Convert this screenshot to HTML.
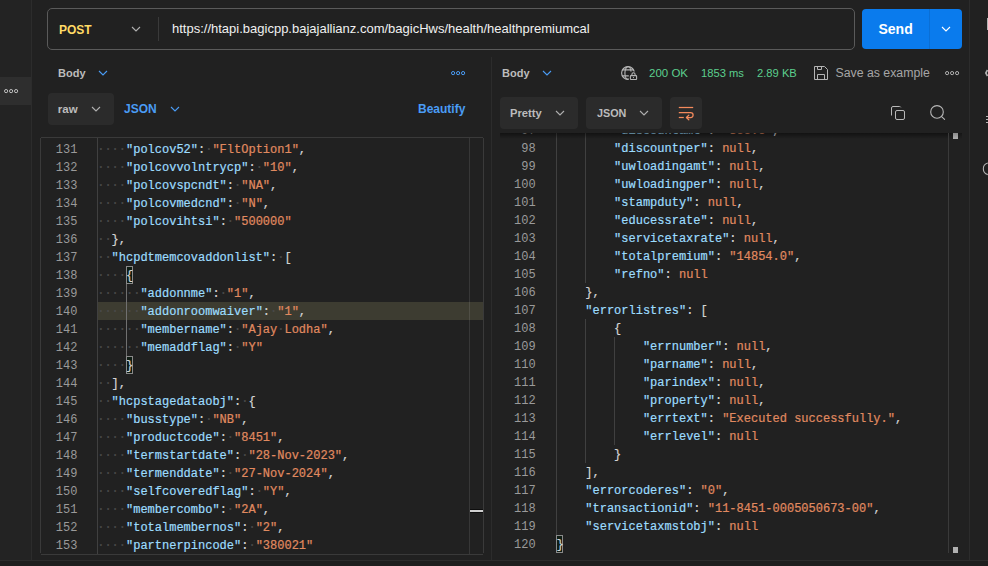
<!DOCTYPE html>
<html><head><meta charset="utf-8">
<style>
*{margin:0;padding:0;box-sizing:border-box}
html,body{width:988px;height:566px;overflow:hidden;background:#212121;font-family:"Liberation Sans",sans-serif}
.a{position:absolute}
.t{position:absolute;white-space:pre;line-height:1}
.ic{position:absolute;overflow:visible}
.ln{position:absolute;width:60px;text-align:right;font-family:"Liberation Mono",monospace;font-size:12px;line-height:18px;color:#9a9a9a;white-space:pre}
.cl{position:absolute;font-family:"Liberation Mono",monospace;font-size:12px;line-height:18px;color:#d4d4d4;white-space:pre;-webkit-text-stroke:0.2px currentColor}
.cl b{font-weight:normal;color:#9cdcfe}
.cl s{text-decoration:none;color:#e08a60}
.cl i{font-style:normal;color:#4a4a4a}
</style></head><body>
<!-- left sidebar -->
<div class="a" style="left:0;top:0;width:31px;height:560px;background:#232323"></div>
<div class="a" style="left:31px;top:0;width:1px;height:560px;background:#2c2c2c"></div>
<div class="a" style="left:0;top:77px;width:31px;height:28px;background:#2e2e2e"></div>
<svg class="ic" style="left:2.6px;top:87.5px" width="16.2" height="6.2"><circle cx="3.1" cy="3.1" r="1.6" fill="none" stroke="#c0c0c0" stroke-width="1"/><circle cx="8.1" cy="3.1" r="1.6" fill="none" stroke="#c0c0c0" stroke-width="1"/><circle cx="13.1" cy="3.1" r="1.6" fill="none" stroke="#c0c0c0" stroke-width="1"/></svg>
<!-- right sidebar border -->
<div class="a" style="left:969px;top:0;width:1px;height:560px;background:#2c2c2c"></div>
<!-- status bar -->
<div class="a" style="left:0;top:560px;width:988px;height:1px;background:#2c2c2c"></div>
<div class="a" style="left:0;top:561px;width:988px;height:5px;background:#1e1e1e"></div>

<!-- URL bar -->
<div class="a" style="left:47px;top:8px;width:808px;height:42px;border:1px solid #5a5a5a;border-radius:5px"></div>
<div class="t" style="left:59px;top:23.7px;font-size:12px;font-weight:bold;color:#ffdb66">POST</div>
<svg class="ic" style="left:130.5px;top:25.5px" width="10" height="6" viewBox="0 0 10 6"><path d="M1 1 L5.0 5 L9 1" fill="none" stroke="#b0b0b0" stroke-width="1.1"/></svg>
<div class="a" style="left:158px;top:17px;width:1px;height:24px;background:#3a3a3a"></div>
<div class="t" style="left:172px;top:22px;font-size:13px;color:#f0f0f0">https://htapi.bagicpp.bajajallianz.com/bagicHws/health/healthpremiumcal</div>
<!-- Send -->
<div class="a" style="left:862px;top:9px;width:100px;height:40px;background:#0a7bed;border-radius:4px"></div>
<div class="a" style="left:929px;top:9px;width:1px;height:40px;background:#0a6fd6"></div>
<div class="t" style="left:878.5px;top:21.9px;font-size:14px;font-weight:bold;color:#ffffff">Send</div>
<svg class="ic" style="left:940.5px;top:25.5px" width="10" height="6" viewBox="0 0 10 6"><path d="M1 1 L5.0 5 L9 1" fill="none" stroke="#ffffff" stroke-width="1.1"/></svg>

<!-- left toolbar -->
<div class="t" style="left:58px;top:67.5px;font-size:11px;font-weight:bold;color:#bcbcbc">Body</div>
<svg class="ic" style="left:97.5px;top:69.5px" width="10" height="6" viewBox="0 0 10 6"><path d="M1 1 L5.0 5 L9 1" fill="none" stroke="#4a9cf5" stroke-width="1.1"/></svg>
<svg class="ic" style="left:449.5px;top:70px" width="16.2" height="6.2"><circle cx="3.1" cy="3.1" r="1.6" fill="none" stroke="#4a9cf5" stroke-width="1"/><circle cx="8.1" cy="3.1" r="1.6" fill="none" stroke="#4a9cf5" stroke-width="1"/><circle cx="13.1" cy="3.1" r="1.6" fill="none" stroke="#4a9cf5" stroke-width="1"/></svg>
<div class="a" style="left:48px;top:93px;width:66px;height:32px;background:#2b2b2b;border-radius:4px"></div>
<div class="t" style="left:57.8px;top:103.8px;font-size:11.5px;font-weight:bold;color:#bcbcbc">raw</div>
<svg class="ic" style="left:90.5px;top:105.5px" width="10" height="6" viewBox="0 0 10 6"><path d="M1 1 L5.0 5 L9 1" fill="none" stroke="#b0b0b0" stroke-width="1.1"/></svg>
<div class="t" style="left:124px;top:102.8px;font-size:12px;font-weight:bold;color:#4a9cf5">JSON</div>
<svg class="ic" style="left:169.5px;top:105.5px" width="10" height="6" viewBox="0 0 10 6"><path d="M1 1 L5.0 5 L9 1" fill="none" stroke="#4a9cf5" stroke-width="1.1"/></svg>
<div class="t" style="left:418px;top:102.8px;font-size:12px;font-weight:bold;color:#4a9cf5">Beautify</div>

<!-- divider -->
<div class="a" style="left:491px;top:57px;width:1px;height:503px;background:#2c2c2c"></div>

<!-- right toolbar -->
<div class="t" style="left:502px;top:67.5px;font-size:11px;font-weight:bold;color:#bcbcbc">Body</div>
<svg class="ic" style="left:541.5px;top:69.5px" width="10" height="6" viewBox="0 0 10 6"><path d="M1 1 L5.0 5 L9 1" fill="none" stroke="#4a9cf5" stroke-width="1.1"/></svg>
<div class="t" style="left:649px;top:67.6px;font-size:11.5px;color:#5ccf8e">200 OK</div>
<div class="t" style="left:701px;top:67.6px;font-size:11.2px;color:#5ccf8e">1853 ms</div>
<div class="t" style="left:757px;top:67.6px;font-size:11.2px;color:#5ccf8e">2.89 KB</div>
<div class="t" style="left:835.5px;top:67px;font-size:12.3px;color:#a6a6a6">Save as example</div>
<svg class="ic" style="left:943.5px;top:70px" width="16.2" height="6.2"><circle cx="3.1" cy="3.1" r="1.6" fill="none" stroke="#b0b0b0" stroke-width="1"/><circle cx="8.1" cy="3.1" r="1.6" fill="none" stroke="#b0b0b0" stroke-width="1"/><circle cx="13.1" cy="3.1" r="1.6" fill="none" stroke="#b0b0b0" stroke-width="1"/></svg>
<div class="a" style="left:500px;top:97px;width:78px;height:32px;background:#2b2b2b;border-radius:4px"></div>
<div class="t" style="left:510px;top:107.5px;font-size:11.2px;font-weight:bold;color:#bcbcbc">Pretty</div>
<svg class="ic" style="left:554.5px;top:109.5px" width="10" height="6" viewBox="0 0 10 6"><path d="M1 1 L5.0 5 L9 1" fill="none" stroke="#b0b0b0" stroke-width="1.1"/></svg>
<div class="a" style="left:586px;top:97px;width:76px;height:32px;background:#2b2b2b;border-radius:4px"></div>
<div class="t" style="left:597px;top:107.5px;font-size:10.8px;font-weight:bold;color:#bcbcbc">JSON</div>
<svg class="ic" style="left:638.5px;top:109.5px" width="10" height="6" viewBox="0 0 10 6"><path d="M1 1 L5.0 5 L9 1" fill="none" stroke="#b0b0b0" stroke-width="1.1"/></svg>
<div class="a" style="left:670px;top:97px;width:32px;height:32px;background:#2b2b2b;border-radius:4px"></div>

<!-- left editor -->
<div class="a" style="left:41px;top:137px;width:442px;height:1px;background:#3a3a3a"></div>
<div class="a" style="left:40px;top:138px;width:1px;height:415px;background:#3a3a3a"></div>
<div class="a" style="left:483px;top:138px;width:1px;height:415px;background:#3a3a3a"></div>
<div class="a" style="left:41px;top:554px;width:442px;height:1px;background:#3a3a3a"></div>
<div class="a" style="left:97px;top:138px;width:1px;height:416px;background:#404040"></div>
<div class="a" style="left:98px;top:302px;width:385px;height:18px;background:#3d3c31"></div>
<div class="a" style="left:126px;top:266px;width:1px;height:108px;background:#707070"></div>
<div class="a" style="left:126px;top:266px;width:7px;height:18px;border:1px solid #8a8a8a;background:#0f1d14"></div>
<div class="a" style="left:126px;top:356px;width:7px;height:18px;border:1px solid #8a8a8a;background:#0f1d14"></div>
<div class="a" style="left:469px;top:138px;width:1px;height:416px;background:rgba(255,255,255,0.1)"></div>
<div class="a" style="left:470px;top:509px;width:13px;height:4px;background:rgba(0,0,0,0.55)"></div>
<div class="a" style="left:470px;top:510px;width:13px;height:2px;background:#d0d0d0"></div>
<div class="ln" style="top:141px;left:17.400000000000006px">131</div>
<div class="cl" style="top:141px;left:97.2px"><i>····</i><b>&quot;polcov52&quot;</b>:<i>·</i><s>"FltOption1"</s>,</div>
<div class="ln" style="top:159px;left:17.400000000000006px">132</div>
<div class="cl" style="top:159px;left:97.2px"><i>····</i><b>&quot;polcovvolntrycp&quot;</b>:<i>·</i><s>"10"</s>,</div>
<div class="ln" style="top:177px;left:17.400000000000006px">133</div>
<div class="cl" style="top:177px;left:97.2px"><i>····</i><b>&quot;polcovspcndt&quot;</b>:<i>·</i><s>"NA"</s>,</div>
<div class="ln" style="top:195px;left:17.400000000000006px">134</div>
<div class="cl" style="top:195px;left:97.2px"><i>····</i><b>&quot;polcovmedcnd&quot;</b>:<i>·</i><s>"N"</s>,</div>
<div class="ln" style="top:213px;left:17.400000000000006px">135</div>
<div class="cl" style="top:213px;left:97.2px"><i>····</i><b>&quot;polcovihtsi&quot;</b>:<i>·</i><s>"500000"</s></div>
<div class="ln" style="top:231px;left:17.400000000000006px">136</div>
<div class="cl" style="top:231px;left:97.2px"><i>··</i>},</div>
<div class="ln" style="top:249px;left:17.400000000000006px">137</div>
<div class="cl" style="top:249px;left:97.2px"><i>··</i><b>&quot;hcpdtmemcovaddonlist&quot;</b>:<i>·</i>[</div>
<div class="ln" style="top:267px;left:17.400000000000006px">138</div>
<div class="cl" style="top:267px;left:97.2px"><i>····</i>{</div>
<div class="ln" style="top:285px;left:17.400000000000006px">139</div>
<div class="cl" style="top:285px;left:97.2px"><i>······</i><b>&quot;addonnme&quot;</b>:<i>·</i><s>"1"</s>,</div>
<div class="ln" style="top:303px;left:17.400000000000006px">140</div>
<div class="cl" style="top:303px;left:97.2px"><i>······</i><b>&quot;addonroomwaiver&quot;</b>:<i>·</i><s>"1"</s>,</div>
<div class="ln" style="top:321px;left:17.400000000000006px">141</div>
<div class="cl" style="top:321px;left:97.2px"><i>······</i><b>&quot;membername&quot;</b>:<i>·</i><s>"Ajay</s><i>·</i><s>Lodha"</s>,</div>
<div class="ln" style="top:339px;left:17.400000000000006px">142</div>
<div class="cl" style="top:339px;left:97.2px"><i>······</i><b>&quot;memaddflag&quot;</b>:<i>·</i><s>"Y"</s></div>
<div class="ln" style="top:357px;left:17.400000000000006px">143</div>
<div class="cl" style="top:357px;left:97.2px"><i>····</i>}</div>
<div class="ln" style="top:375px;left:17.400000000000006px">144</div>
<div class="cl" style="top:375px;left:97.2px"><i>··</i>],</div>
<div class="ln" style="top:393px;left:17.400000000000006px">145</div>
<div class="cl" style="top:393px;left:97.2px"><i>··</i><b>&quot;hcpstagedataobj&quot;</b>:<i>·</i>{</div>
<div class="ln" style="top:411px;left:17.400000000000006px">146</div>
<div class="cl" style="top:411px;left:97.2px"><i>····</i><b>&quot;busstype&quot;</b>:<i>·</i><s>"NB"</s>,</div>
<div class="ln" style="top:429px;left:17.400000000000006px">147</div>
<div class="cl" style="top:429px;left:97.2px"><i>····</i><b>&quot;productcode&quot;</b>:<i>·</i><s>"8451"</s>,</div>
<div class="ln" style="top:447px;left:17.400000000000006px">148</div>
<div class="cl" style="top:447px;left:97.2px"><i>····</i><b>&quot;termstartdate&quot;</b>:<i>·</i><s>"28-Nov-2023"</s>,</div>
<div class="ln" style="top:465px;left:17.400000000000006px">149</div>
<div class="cl" style="top:465px;left:97.2px"><i>····</i><b>&quot;termenddate&quot;</b>:<i>·</i><s>"27-Nov-2024"</s>,</div>
<div class="ln" style="top:483px;left:17.400000000000006px">150</div>
<div class="cl" style="top:483px;left:97.2px"><i>····</i><b>&quot;selfcoveredflag&quot;</b>:<i>·</i><s>"Y"</s>,</div>
<div class="ln" style="top:501px;left:17.400000000000006px">151</div>
<div class="cl" style="top:501px;left:97.2px"><i>····</i><b>&quot;membercombo&quot;</b>:<i>·</i><s>"2A"</s>,</div>
<div class="ln" style="top:519px;left:17.400000000000006px">152</div>
<div class="cl" style="top:519px;left:97.2px"><i>····</i><b>&quot;totalmembernos&quot;</b>:<i>·</i><s>"2"</s>,</div>
<div class="ln" style="top:537px;left:17.400000000000006px">153</div>
<div class="cl" style="top:537px;left:97.2px"><i>····</i><b>&quot;partnerpincode&quot;</b>:<i>·</i><s>"380021"</s></div>

<!-- right editor -->
<div class="a" style="left:500px;top:133px;width:469px;height:427px;overflow:hidden">
<div style="position:absolute;left:-500px;top:-133px;width:988px;height:566px">
<div class="a" style="left:556px;top:121px;width:1px;height:414px;background:#404040"></div>
<div class="a" style="left:585px;top:121px;width:1px;height:162px;background:#404040"></div>
<div class="a" style="left:585px;top:319px;width:1px;height:144px;background:#404040"></div>
<div class="a" style="left:614px;top:337px;width:1px;height:108px;background:#404040"></div>
<div class="a" style="left:556px;top:535px;width:7px;height:18px;border:1px solid #8a8a8a;background:#0f1d14"></div>
<div class="ln" style="top:122px;left:475.6px">97</div>
<div class="cl" style="top:122px;left:556.5px">        <b>&quot;discountamt&quot;</b>: <s>"300.0"</s>,</div>
<div class="ln" style="top:140px;left:475.6px">98</div>
<div class="cl" style="top:140px;left:556.5px">        <b>&quot;discountper&quot;</b>: <s>null</s>,</div>
<div class="ln" style="top:158px;left:475.6px">99</div>
<div class="cl" style="top:158px;left:556.5px">        <b>&quot;uwloadingamt&quot;</b>: <s>null</s>,</div>
<div class="ln" style="top:176px;left:475.6px">100</div>
<div class="cl" style="top:176px;left:556.5px">        <b>&quot;uwloadingper&quot;</b>: <s>null</s>,</div>
<div class="ln" style="top:194px;left:475.6px">101</div>
<div class="cl" style="top:194px;left:556.5px">        <b>&quot;stampduty&quot;</b>: <s>null</s>,</div>
<div class="ln" style="top:212px;left:475.6px">102</div>
<div class="cl" style="top:212px;left:556.5px">        <b>&quot;educessrate&quot;</b>: <s>null</s>,</div>
<div class="ln" style="top:230px;left:475.6px">103</div>
<div class="cl" style="top:230px;left:556.5px">        <b>&quot;servicetaxrate&quot;</b>: <s>null</s>,</div>
<div class="ln" style="top:248px;left:475.6px">104</div>
<div class="cl" style="top:248px;left:556.5px">        <b>&quot;totalpremium&quot;</b>: <s>"14854.0"</s>,</div>
<div class="ln" style="top:266px;left:475.6px">105</div>
<div class="cl" style="top:266px;left:556.5px">        <b>&quot;refno&quot;</b>: <s>null</s></div>
<div class="ln" style="top:284px;left:475.6px">106</div>
<div class="cl" style="top:284px;left:556.5px">    },</div>
<div class="ln" style="top:302px;left:475.6px">107</div>
<div class="cl" style="top:302px;left:556.5px">    <b>&quot;errorlistres&quot;</b>: [</div>
<div class="ln" style="top:320px;left:475.6px">108</div>
<div class="cl" style="top:320px;left:556.5px">        {</div>
<div class="ln" style="top:338px;left:475.6px">109</div>
<div class="cl" style="top:338px;left:556.5px">            <b>&quot;errnumber&quot;</b>: <s>null</s>,</div>
<div class="ln" style="top:356px;left:475.6px">110</div>
<div class="cl" style="top:356px;left:556.5px">            <b>&quot;parname&quot;</b>: <s>null</s>,</div>
<div class="ln" style="top:374px;left:475.6px">111</div>
<div class="cl" style="top:374px;left:556.5px">            <b>&quot;parindex&quot;</b>: <s>null</s>,</div>
<div class="ln" style="top:392px;left:475.6px">112</div>
<div class="cl" style="top:392px;left:556.5px">            <b>&quot;property&quot;</b>: <s>null</s>,</div>
<div class="ln" style="top:410px;left:475.6px">113</div>
<div class="cl" style="top:410px;left:556.5px">            <b>&quot;errtext&quot;</b>: <s>"Executed successfully."</s>,</div>
<div class="ln" style="top:428px;left:475.6px">114</div>
<div class="cl" style="top:428px;left:556.5px">            <b>&quot;errlevel&quot;</b>: <s>null</s></div>
<div class="ln" style="top:446px;left:475.6px">115</div>
<div class="cl" style="top:446px;left:556.5px">        }</div>
<div class="ln" style="top:464px;left:475.6px">116</div>
<div class="cl" style="top:464px;left:556.5px">    ],</div>
<div class="ln" style="top:482px;left:475.6px">117</div>
<div class="cl" style="top:482px;left:556.5px">    <b>&quot;errorcoderes&quot;</b>: <s>"0"</s>,</div>
<div class="ln" style="top:500px;left:475.6px">118</div>
<div class="cl" style="top:500px;left:556.5px">    <b>&quot;transactionid&quot;</b>: <s>"11-8451-0005050673-00"</s>,</div>
<div class="ln" style="top:518px;left:475.6px">119</div>
<div class="cl" style="top:518px;left:556.5px">    <b>&quot;servicetaxmstobj&quot;</b>: <s>null</s></div>
<div class="ln" style="top:536px;left:475.6px">120</div>
<div class="cl" style="top:536px;left:556.5px">}</div>
</div>
</div>
<div class="a" style="left:500px;top:133px;width:448px;height:6px;background:linear-gradient(rgba(0,0,0,0.45),rgba(0,0,0,0))"></div>
<div class="a" style="left:949px;top:133px;width:13px;height:6px;background:linear-gradient(rgba(0,0,0,0.35),rgba(0,0,0,0))"></div>
<div class="a" style="left:948px;top:133px;width:1px;height:420px;background:#3a3a3a"></div>
<div class="a" style="left:953px;top:133px;width:5px;height:6px;background:linear-gradient(#8a8a8a,#b0b0b0)"></div>
<div class="a" style="left:953px;top:547px;width:5px;height:6px;background:#b0b0b0"></div>



<!-- right edge icon fragments -->
<div class="a" style="left:987px;top:18px;width:1px;height:12px;background:#b4b4b4"></div>
<svg class="ic" style="left:984px;top:69px" width="4" height="8"><path d="M3.5 1 L1.8 4 L3.5 7" fill="none" stroke="#b4b4b4" stroke-width="1.6"/></svg>
<div class="a" style="left:986px;top:116px;width:2px;height:1px;background:#b4b4b4"></div>
<div class="a" style="left:986px;top:119px;width:2px;height:1px;background:#b4b4b4"></div>
<div class="a" style="left:986px;top:122px;width:2px;height:1px;background:#b4b4b4"></div>
<svg class="ic" style="left:985px;top:162px" width="3" height="14"><path d="M2.8 1 A6 6 0 0 0 2.8 12.6" fill="none" stroke="#b4b4b4" stroke-width="1.1"/></svg>

<!-- icons -->
<svg class="ic" style="left:620px;top:65px" width="18" height="16" viewBox="0 0 18 16">
 <g fill="none" stroke="#b4b4b4" stroke-width="1.15">
  <circle cx="8" cy="8" r="6.4"/>
  <ellipse cx="8" cy="8" rx="3.1" ry="6.4"/>
  <path d="M2.3 4.9 H13.7 M2.2 10.8 H13.8"/>
 </g>
 <rect x="8.8" y="6.6" width="9.2" height="9.4" fill="#212121"/>
 <g fill="none" stroke="#b4b4b4" stroke-width="1.1">
  <rect x="10.4" y="10.6" width="6.2" height="3.9" rx="0.6"/>
  <path d="M11.9 10.6 V9.4 A1.6 1.6 0 0 1 15.1 9.4 V10.6"/>
 </g>
 <rect x="13.1" y="12" width="0.9" height="1.1" fill="#b4b4b4"/>
</svg>
<svg class="ic" style="left:814px;top:66px" width="15" height="15" viewBox="0 0 15 15">
 <g fill="none" stroke="#b4b4b4" stroke-width="1">
  <path d="M0.5 0.5 H10.5 L13.5 3.5 V13.5 H0.5 Z"/>
  <path d="M3.5 0.5 V3.5 H7.5 V0.5"/>
  <path d="M3.5 13.5 V8.5 H10.5 V13.5"/>
 </g>
</svg>
<svg class="ic" style="left:678px;top:105px" width="16" height="16" viewBox="0 0 16 16">
 <g fill="none" stroke="#f58a5c" stroke-width="1.25" stroke-linejoin="round">
  <path d="M0.8 2.5 H15.2"/>
  <path d="M0.8 7.5 H12.6 A2.5 2.5 0 0 1 12.6 12.5 H8.6"/>
  <path d="M10.8 10.2 L8.4 12.5 L10.8 14.8" stroke-linecap="round"/>
  <path d="M0.8 12.5 H5.8"/>
 </g>
</svg>
<svg class="ic" style="left:890px;top:105px" width="16" height="16" viewBox="0 0 16 16">
 <g fill="none" stroke="#b8b8b8" stroke-width="1">
  <path d="M1.5 10.5 V3 A1.5 1.5 0 0 1 3 1.5 H9.5 A1.5 1.5 0 0 1 10.8 2.3"/>
  <rect x="5.5" y="5.5" width="9" height="9" rx="1.5"/>
 </g>
</svg>
<svg class="ic" style="left:929px;top:104px" width="17" height="17" viewBox="0 0 17 17">
 <g fill="none" stroke="#b8b8b8" stroke-width="1.1" stroke-linecap="round">
  <circle cx="8" cy="7.9" r="6.3"/>
  <path d="M12.6 12.6 L15.6 15.4"/>
 </g>
</svg>

</body></html>
